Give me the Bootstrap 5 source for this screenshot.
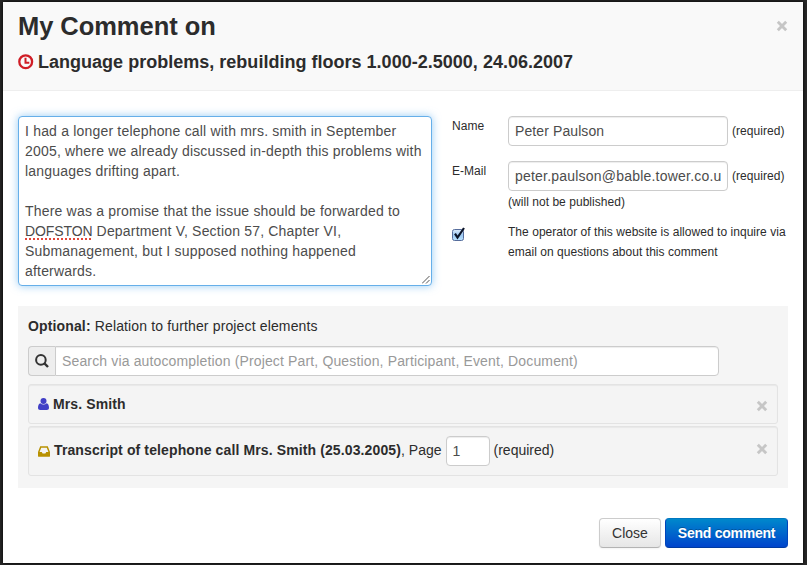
<!DOCTYPE html>
<html lang="en">
<head>
<meta charset="utf-8">
<meta name="viewport" content="width=device-width, initial-scale=1">
<title>My Comment</title>
<link href="https://cdn.jsdelivr.net/npm/bootstrap@5.3.0/dist/css/bootstrap.min.css" rel="stylesheet">
<style>
body{background:#282828;font-family:"Liberation Sans",Arial,sans-serif;font-size:14px;line-height:20px;color:#2c2c2c;height:565px;overflow:hidden;padding:2px 4px 2px 3px}
.dialog{height:561px;background:#fff;box-shadow:0 0 4px #000;border-radius:0}
.dialog-head{height:89px;background:#f9f9f9;border-bottom:1px solid #eee;padding:4px 15px 0}
.dialog-head h3{font-size:25.5px;line-height:40px;letter-spacing:-.05px}
.dialog-head h4{font-size:18px;line-height:20px;margin-top:6px!important;letter-spacing:.015px}
.x-btn{border:0;background:none;padding:0;width:10px;height:10px;line-height:0;color:#c6c6c6}
.x-btn svg{display:block;overflow:visible}
.head-x{margin:15px 1px 0 0}
.dialog-body{padding:25px 15px 0}
.field{border:1px solid #ccc;border-radius:4px;background:#fff;color:#4c4c4c;padding:4px 6px;font-size:14px;line-height:20px;height:30px;box-shadow:inset 0 1px 1px rgba(0,0,0,.075)}
.comment{width:414px;height:170px;border-color:#66afe9;box-shadow:0 0 8px rgba(82,168,236,.6);flex:none;white-space:nowrap;letter-spacing:.19px}
.comment .grip{position:absolute;right:1px;bottom:1px}
.misspelt{text-decoration:underline dotted #e2463a 2px;text-underline-offset:2px;text-decoration-skip-ink:none;letter-spacing:-.1px}
.details{width:350px;margin-left:20px;font-size:12px;letter-spacing:.04px}
.details .lbl{width:56px;flex:none}
.w-field{width:220px;flex:none}
#nm{letter-spacing:.1px}
#em{letter-spacing:.21px}
.mail{margin-top:15px}
.allow{margin-top:12px}
.tick{width:12px;height:12px;margin-top:7px;overflow:visible;display:block}
.relations{height:182px;margin-top:20px;background:#f5f5f5;padding:10px 10px 0}
.opt{letter-spacing:.14px}
.search{margin-top:10px;width:691px}
.search .addon{width:27px;flex:none;height:30px;border:1px solid #ccc;border-right:0;border-radius:4px 0 0 4px;background:#eee}
.search .field{border-radius:0 4px 4px 0;letter-spacing:.145px}
.search input::placeholder{color:#999;opacity:1}
.item{background:#f4f4f4;border:1px solid #e3e3e3;border-radius:3px;box-shadow:inset 0 1px 1px rgba(0,0,0,.05);padding:0 10px 0 9px}
.item-a{height:40px;margin-top:8px}
.item-b{height:50px;margin-top:2px}
.item-b > b,.item-b > span{padding-bottom:2px}
.item b{margin-left:4px;letter-spacing:.12px}
.page-no{width:44px;margin:0 4px}
.dialog-foot{padding:30px 15px 0}
.act{height:30px;font-size:14px;line-height:20px;padding:4px 0;border-radius:4px;white-space:nowrap}
.act-close{color:#333;background:linear-gradient(#fff,#e6e6e6);border:1px solid #ccc;border-bottom-color:#b3b3b3;box-shadow:0 1px 2px rgba(0,0,0,.05);width:62px}
.act-send{color:#fff;letter-spacing:-.25px;background:linear-gradient(#08c,#04c);border:1px solid #04b;border-top-color:#0078c0;border-bottom-color:#003aa0;text-shadow:0 -1px 0 rgba(0,0,0,.25);width:123px}
</style>
</head>
<body>
<main class="dialog d-flex flex-column">
  <header class="dialog-head d-flex justify-content-between">
    <div class="text-nowrap">
      <h3 class="fw-bold m-0">My Comment on</h3>
      <h4 class="fw-bold m-0 d-flex align-items-center"><svg class="me-1" width="16" height="16" viewBox="0 0 16 16" fill="none" stroke="#d01d26" stroke-width="2.3"><circle cx="7.700" cy="7.700" r="6.400"/><path d="M7.500 3.800v4.900h3.800" stroke-width="2"/></svg><span>Language problems, rebuilding floors 1.000-2.5000, 24.06.2007</span></h4>
    </div>
    <button class="x-btn head-x" aria-label="Close"><svg width="10" height="10" viewBox="0 0 10 10" stroke="currentColor" stroke-width="2.9"><path d="M.8 .8l8.400 8.400M9.200 .8l-8.400 8.400"/></svg></button>
  </header>
  <section class="dialog-body">
    <div class="d-flex align-items-start">
      <div class="field comment position-relative" role="textbox" aria-multiline="true">I had a longer telephone call with mrs. smith in September<br>2005, where we already discussed in-depth this problems with<br>languages drifting apart.<br><br>There was a promise that the issue should be forwarded to<br><span class="misspelt">DOFSTON</span> Department V, Section 57, Chapter VI,<br>Submanagement, but I supposed nothing happened<br>afterwards.<svg class="grip" width="8" height="8" viewBox="0 0 8 8" stroke="#555" stroke-width="1"><path d="M0 7.500L7.500 0M4 7.500L7.500 4"/></svg></div>
      <div class="details">
        <div class="d-flex"><label class="lbl" for="nm">Name</label><input id="nm" class="field w-field" value="Peter Paulson"><span class="ms-1 mt-1 pt-1 lh-sm">(required)</span></div>
        <div class="d-flex mail"><label class="lbl" for="em">E-Mail</label><input id="em" class="field w-field" value="peter.paulson@bable.tower.co.uk"><span class="ms-1 mt-1 pt-1 lh-sm">(required)</span></div>
        <div class="d-flex pt-1 lh-sm"><span class="lbl"></span><span>(will not be published)</span></div>
        <div class="d-flex allow text-nowrap"><span class="lbl"><svg class="tick" viewBox="0 0 12 12" role="img" aria-label="checked"><defs><linearGradient id="g" x2="0" y2="1"><stop stop-color="#dcebfa"/><stop offset=".5" stop-color="#9cc8f2"/><stop offset="1" stop-color="#b9e3ff"/></linearGradient></defs><rect x=".5" y=".5" width="11" height="11" rx="2" fill="url(#g)" stroke="#566d9c"/><path d="M3 4.700L5.500 8.500L12 -1" fill="none" stroke="#0b1428" stroke-width="2.200"/></svg></span><span>The operator of this website is allowed to inquire via<br>email on questions about this comment</span></div>
      </div>
    </div>
    <div class="relations">
      <div class="opt"><b>Optional:</b> Relation to further project elements</div>
      <div class="search d-flex">
        <span class="addon d-flex align-items-center justify-content-center"><svg width="14" height="14" viewBox="0 0 14 14" fill="none" stroke="#333" stroke-width="2"><circle cx="5.900" cy="5.900" r="4.800"/><path d="M9.200 9.200l3.800 3.800" stroke-width="2.400"/></svg></span>
        <input class="field flex-grow-1" placeholder="Search via autocompletion (Project Part, Question, Participant, Event, Document)">
      </div>
      <div class="item item-a d-flex align-items-center"><svg width="11" height="12" viewBox="0 0 11 12" fill="#413fc6"><circle cx="5.500" cy="3" r="3"/><path d="M2.400 5.200C.8 5.600 0 7.400 0 9.800 0 11.300.9 12 2.200 12h6.600c1.300 0 2.200-.7 2.200-2.200 0-2.400-.8-4.200-2.400-4.600a4.200 4.200 0 0 1-6.200 0z"/></svg><b>Mrs. Smith</b><button class="x-btn ms-auto mt-1" aria-label="Remove"><svg width="10" height="10" viewBox="0 0 10 10" stroke="currentColor" stroke-width="2.900"><path d="M.8 .8l8.400 8.400M9.200 .8l-8.400 8.400"/></svg></button></div>
      <div class="item item-b d-flex align-items-center text-nowrap"><svg width="12" height="11" viewBox="0 0 12 11"><path fill="#b89100" fill-rule="evenodd" d="M2.200.3h7.600L12 6v4.300q0 .4-.5.4H.5Q0 10.700 0 10.300V6zM3.200 1.800L1.600 6h2.200l.8 1.600h2.800L8.200 6h2.200L8.800 1.800z"/></svg><b>Transcript of telephone call Mrs. Smith (25.03.2005)</b><span>, Page</span><input class="field page-no" value="1" aria-label="Page"><span>(required)</span><button class="x-btn ms-auto mb-1" aria-label="Remove"><svg width="10" height="10" viewBox="0 0 10 10" stroke="currentColor" stroke-width="2.900"><path d="M.8 .8l8.400 8.400M9.200 .8l-8.400 8.400"/></svg></button></div>
    </div>
  </section>
  <footer class="dialog-foot d-flex justify-content-end gap-1">
    <button class="act act-close">Close</button><button class="act act-send fw-bold">Send comment</button>
  </footer>
</main>
<script src="https://cdn.jsdelivr.net/npm/bootstrap@5.3.0/dist/js/bootstrap.bundle.min.js"></script>
</body>
</html>
